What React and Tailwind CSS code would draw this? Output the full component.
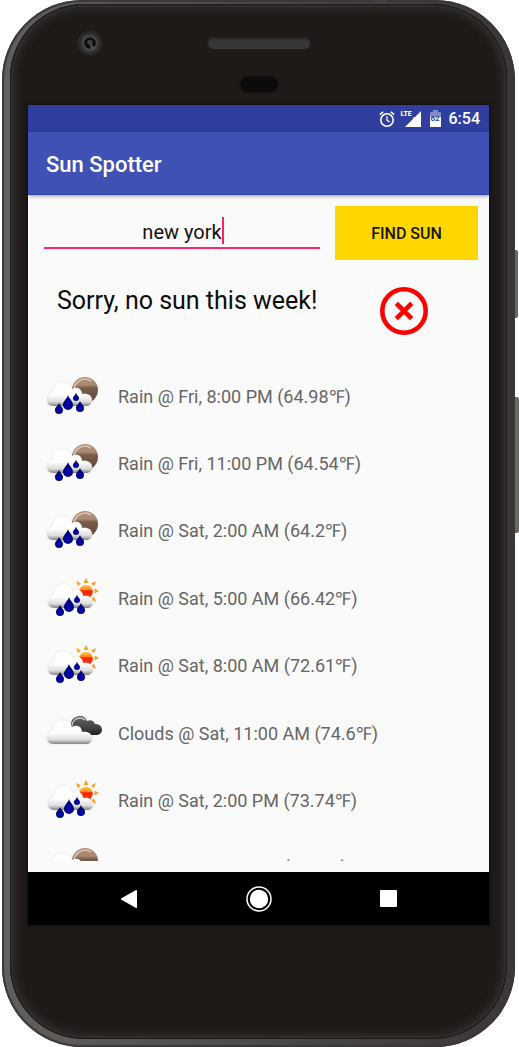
import { useState } from "react";

const forecasts = [
  { icon: "night", text: "Rain @ Fri, 8:00 PM (64.98℉)" },
  { icon: "night", text: "Rain @ Fri, 11:00 PM (64.54℉)" },
  { icon: "night", text: "Rain @ Sat, 2:00 AM (64.2℉)" },
  { icon: "day", text: "Rain @ Sat, 5:00 AM (66.42℉)" },
  { icon: "day", text: "Rain @ Sat, 8:00 AM (72.61℉)" },
  { icon: "clouds", text: "Clouds @ Sat, 11:00 AM (74.6℉)" },
  { icon: "day", text: "Rain @ Sat, 2:00 PM (73.74℉)" },
  { icon: "night", text: "Rain @ Sat, 5:00 PM (69.8℉)" },
];

const CLOUD =
  "M9 34C4 34 2 31 2 28C2 24 5 21 8 20C8 14 12 10 17 10C22 10 25 13 27 17C32 14 37 17 37 22C42 21 47 23 47 28C47 32 44 34 41 34Z";

function Gradients() {
  return (
    <svg className="absolute size-0" aria-hidden="true">
      <defs>
        <linearGradient id="cloud" x1="0" y1="0" x2="0" y2="1">
          <stop offset="0" stopColor="#fff" />
          <stop offset=".55" stopColor="#fdfdfd" />
          <stop offset=".82" stopColor="#dcdcdc" />
          <stop offset="1" stopColor="#808080" />
        </linearGradient>
        <linearGradient id="moon" x1="0" y1="0" x2="0" y2="1">
          <stop offset="0" stopColor="#b08c76" />
          <stop offset=".3" stopColor="#a98a75" />
          <stop offset=".42" stopColor="#7a5c48" />
          <stop offset="1" stopColor="#5c4638" />
        </linearGradient>
        <linearGradient id="sun" x1="0" y1="0" x2="0" y2="1">
          <stop offset="0" stopColor="#ffd040" />
          <stop offset=".35" stopColor="#ff8a20" />
          <stop offset=".45" stopColor="#ff2000" />
          <stop offset="1" stopColor="#ff3c14" />
        </linearGradient>
        <linearGradient id="dark" x1="0" y1="0" x2="0" y2="1">
          <stop offset="0" stopColor="#666" />
          <stop offset=".6" stopColor="#444" />
          <stop offset="1" stopColor="#1c1c1c" />
        </linearGradient>
        <radialGradient id="drop" cx=".5" cy=".65" r=".55">
          <stop offset="0" stopColor="#0606c8" />
          <stop offset="1" stopColor="#00005e" />
        </radialGradient>
        <filter id="haze" x="-20%" y="-20%" width="140%" height="140%">
          <feGaussianBlur stdDeviation="1" />
        </filter>
      </defs>
    </svg>
  );
}

function Cloud() {
  return (
    <>
      <path d={CLOUD} fill="#999" opacity=".3" filter="url(#haze)" />
      <path d={CLOUD} fill="url(#cloud)" />
    </>
  );
}

function Drops() {
  return (
    <g fill="url(#drop)">
      <path d="M23 23C24 27 28 29 28 33A5 5 0 0 1 18 33C18 29 22 27 23 23Z" />
      <path d="M14 31C15 34 18 35 18 38A4 4 0 0 1 10 38C10 35 13 34 14 31Z" />
      <path d="M31 20C31 23 34 24 34 26A3 3 0 0 1 28 26C28 24 31 23 31 20Z" />
      <path d="M35 29C36 32 39 33 39 36A4 4 0 0 1 31 36C31 33 34 32 35 29Z" />
    </g>
  );
}

function WeatherIcon({ kind }) {
  return (
    <svg viewBox="0 0 60 50" className="h-[50px] w-[60px] shrink-0" aria-hidden="true">
      {kind === "night" && (
        <>
          <circle cx="40" cy="18" r="13" fill="url(#moon)" />
          <path d="M29 19A11 11 0 0 1 46 9" fill="none" stroke="#d8c4b6" strokeWidth="1.6" />
        </>
      )}
      {kind === "day" && (
        <>
          <path
            d="M41 4L43.5 9L38.5 9ZM51 7L49 12L46 9.500ZM54 17L49.500 19.500L49.500 14.500ZM51 28L46 25.500L49 22.500ZM31 7L36 9.500L33 12Z"
            fill="#ff9d1e"
          />
          <circle cx="41" cy="17.5" r="6.8" fill="url(#sun)" />
        </>
      )}
      {kind === "clouds" && (
        <>
          <path
            d="M29 22C26 20 25 17 26 14C27 9 31 7 35 7C39 7 41 9 42 12C46 10 49 12 50 15C54 15 57 17 57 21C57 24 54 26 51 26L38 26C36 24 35 22 34 22Z"
            fill="url(#dark)"
          />
          <path d="M27 17C27 12 31 9 35 9C37 9 39 10 40 11" fill="none" stroke="#ccc" strokeWidth="1.3" />
        </>
      )}
      {kind === "clouds" ? (
        <g transform="translate(0 1)">
          <Cloud />
        </g>
      ) : kind === "day" ? (
        <g transform="translate(1 0)">
          <Cloud />
          <Drops />
        </g>
      ) : (
        <>
          <Cloud />
          <Drops />
        </>
      )}
    </svg>
  );
}

function StatusBar() {
  return (
    <div className="flex h-[27px] items-center justify-end bg-[#303f9f] pr-[9px] text-white">
      <svg viewBox="0 0 16 16" className="mr-1.5 size-4" fill="none" stroke="currentColor" role="img" aria-label="Alarm set">
        <circle cx="8" cy="9" r="6.2" strokeWidth="1.6" />
        <path d="M8 5.3V9.3L10.8 11" strokeWidth="1.2" />
        <path d="M.8 3.6L4.2 .8M15.2 3.6L11.8 .8" strokeWidth="1.5" />
      </svg>
      <div className="relative mr-[9px] h-4 w-5">
        <svg viewBox="0 0 20 16" className="h-4 w-5" fill="currentColor" role="img" aria-label="Signal">
          <path d="M20 0V16H4L12 8V6.400H13.600Z" />
        </svg>
        <span className="absolute -top-px left-0 font-['Liberation_Sans_Narrow','Roboto_Condensed',Roboto,sans-serif] text-[8px] leading-[8px] font-bold">
          LTE
        </span>
      </div>
      <div className="relative mr-2 h-[17px] w-[11px]">
        <svg viewBox="0 0 11 17" className="h-[17px] w-[11px]" fill="currentColor" role="img" aria-label="Battery">
          <path d="M3 0H8V2H11V7H0V2H3Z" opacity=".4" />
          <path d="M0 7H11V17H0Z" />
        </svg>
        <span className="absolute inset-x-0 top-1 text-center text-[8px] leading-[9px] font-bold text-[#303f9f]">62</span>
      </div>
      <span className="text-base leading-none font-medium">6:54</span>
    </div>
  );
}

function NavBar() {
  return (
    <nav className="flex h-[53px] items-center justify-center gap-[106px] bg-black text-white">
      <button type="button" aria-label="Back" className="flex size-6 items-center justify-center">
        <svg viewBox="0 0 18 20" className="h-5 w-[18px]" fill="currentColor">
          <path d="M1.4 9.2L15.6 1.2Q17 .6 17 2V18Q17 19.4 15.6 18.8L1.4 10.8Q.2 10 1.4 9.2Z" />
        </svg>
      </button>
      <button type="button" aria-label="Home" className="flex size-6 items-center justify-center">
        <svg viewBox="0 0 26 26" className="size-[26px] shrink-0">
          <circle cx="13" cy="13" r="12" fill="none" stroke="currentColor" strokeWidth="1.5" />
          <circle cx="13" cy="13" r="9.2" fill="currentColor" />
        </svg>
      </button>
      <button type="button" aria-label="Recent apps" className="flex size-6 items-center justify-center">
        <span className="size-[17px] rounded-[1px] bg-white" />
      </button>
    </nav>
  );
}

function Earpiece() {
  return (
    <div className="relative h-[98px]">
      <svg viewBox="0 0 26 26" className="absolute top-[23px] left-[49px] size-[26px]" aria-hidden="true">
        <circle cx="13" cy="13" r="12.5" fill="#2b2928" />
        <circle cx="13" cy="13" r="9.5" fill="#383838" />
        <circle cx="13" cy="13" r="7.5" fill="#484848" />
        <circle cx="13" cy="13" r="5.8" fill="#0d0d0d" />
        <circle cx="13" cy="12.5" r="2.8" fill="#3c3c3c" />
        <path d="M13 13L18 18L14 20Z" fill="#505050" />
      </svg>
      <div className="absolute top-[30px] left-1/2 h-3 w-[103px] -translate-x-1/2 rounded-full bg-[#393838] shadow-[inset_0_2px_2px_#242323]" />
      <div className="absolute top-[70px] left-1/2 h-[15px] w-[37px] -translate-x-1/2 rounded-full bg-[#0b0b0b] shadow-[0_0_1px_1px_#151211]" />
    </div>
  );
}

export default function App() {
  const [city, setCity] = useState("new york");
  return (
    <div className="relative bg-white pr-1 pb-px pl-0.5 font-[Roboto,sans-serif]">
      <Gradients />
      <div className="absolute top-[250px] right-px h-[68px] w-3 rounded-xs bg-[#696766]" />
      <div className="absolute top-[397px] right-0 h-[136px] w-3 rounded-xs bg-[#696764]" />
      <div className="relative rounded-[80px] bg-linear-to-r from-[#625f5d] via-[#4c4947] to-[#3c3636] px-2 pt-1 pb-2 shadow-[inset_0_0_1px_2px_#3a3836]">
        <div className="absolute top-0 left-[373px] h-1.5 w-3 bg-[#454044]" />
        <div className="relative rounded-[74px] bg-[#1e1a18] px-[18px] pt-[3px] pb-[114px] shadow-[inset_0_0_0_1px_#1c1b1a,inset_0_0_0_3px_#2f2d2b,inset_0_0_8px_5px_#302e2d]">
          <Earpiece />
          <main className="overflow-hidden bg-[#fafafa] shadow-[0_0_0_1px_#151110,0_0_2px_2px_#171312]">
            <StatusBar />
            <header className="relative flex h-[63px] items-center border-b border-[#303f9f] bg-[#3f51b5] px-[18px] pt-1 shadow-[0_1px_4px_#0006]">
              <h1 className="text-[22px] leading-7 font-medium text-white">Sun Spotter</h1>
            </header>
            <form className="flex items-center gap-[15px] pt-[11px] pr-[11px] pl-4" onSubmit={(e) => e.preventDefault()}>
              <div className="relative mb-0.5 min-w-0 flex-1 border-b-2 border-[#ff2a6d] pt-0.5">
                <input
                  aria-label="City"
                  value={city}
                  onChange={(e) => setCity(e.target.value)}
                  className="block h-[30px] w-full bg-transparent text-center text-xl text-[#111] caret-[#ff1f69] outline-none"
                />
                <span className="absolute top-0.5 left-1/2 ml-10 h-[27px] w-0.5 bg-[#ff1f69]" />
              </div>
              <button type="submit" className="h-[54px] w-[143px] bg-[#ffd600] pt-0.5 text-base font-medium text-[#151500]">
                FIND SUN
              </button>
            </form>
            <section className="flex items-start justify-between pt-6 pr-[61px] pl-[29px]">
              <p className="text-[25px] leading-[34px] text-[#0c0c0c]">Sorry, no sun this week!</p>
              <svg viewBox="0 0 48 48" className="mt-[3px] size-12 shrink-0" fill="none" stroke="#f00" role="img" aria-label="No sun">
                <circle cx="24" cy="24" r="21.7" strokeWidth="4.6" />
                <path d="M16.3 16.3L31.7 31.7M31.7 16.3L16.3 31.7" strokeWidth="4.6" />
              </svg>
            </section>
            <div className="mt-7 mb-[11px] h-[498px] overflow-y-auto pr-3 pl-[17px] [scrollbar-width:none]">
              <ul className="grid h-[539px] auto-rows-fr">
                {forecasts.map((f) => (
                  <li key={f.text} className="flex items-center gap-[13px]">
                    <WeatherIcon kind={f.icon} />
                    <span className="text-lg whitespace-nowrap text-[#666]">{f.text}</span>
                  </li>
                ))}
              </ul>
            </div>
            <NavBar />
          </main>
        </div>
      </div>
    </div>
  );
}
